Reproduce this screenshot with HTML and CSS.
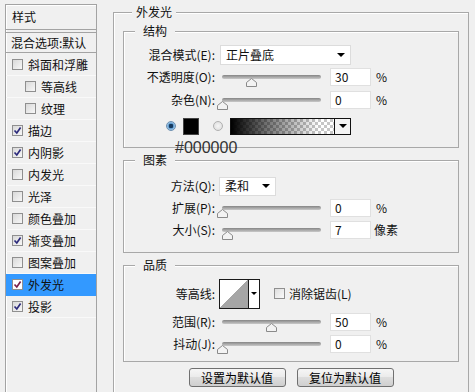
FILE: index.html
```html
<!DOCTYPE html>
<html lang="zh-CN">
<head>
<meta charset="utf-8">
<title>图层样式 - 外发光</title>
<link rel="stylesheet" href="styles.css">
</head>
<body>
<div class="dialog">
  <div class="styles-panel">
    <div class="panel-head">样式</div>
    <div class="panel-blend">混合选项:默认</div>
    <ul class="style-list">
      <li class="style-item"><span class="cb"></span>斜面和浮雕</li>
      <li class="style-item sub"><span class="cb"></span>等高线</li>
      <li class="style-item sub"><span class="cb"></span>纹理</li>
      <li class="style-item"><span class="cb"><svg viewBox="0 0 9 9"><path d="M1.5 4.5 L3.8 7 L7.6 1.6" /></svg></span>描边</li>
      <li class="style-item"><span class="cb"><svg viewBox="0 0 9 9"><path d="M1.5 4.5 L3.8 7 L7.6 1.6" /></svg></span>内阴影</li>
      <li class="style-item"><span class="cb"></span>内发光</li>
      <li class="style-item"><span class="cb"></span>光泽</li>
      <li class="style-item"><span class="cb"></span>颜色叠加</li>
      <li class="style-item"><span class="cb"><svg viewBox="0 0 9 9"><path d="M1.5 4.5 L3.8 7 L7.6 1.6" /></svg></span>渐变叠加</li>
      <li class="style-item"><span class="cb"></span>图案叠加</li>
      <li class="style-item selected"><span class="cb"><svg viewBox="0 0 9 9"><path d="M1.5 4.5 L3.8 7 L7.6 1.6" /></svg></span>外发光</li>
      <li class="style-item"><span class="cb"><svg viewBox="0 0 9 9"><path d="M1.5 4.5 L3.8 7 L7.6 1.6" /></svg></span>投影</li>
    </ul>
  </div>

  <div class="main">
    <span class="legend legend-main">外发光</span>

    <div class="group g1">
      <span class="legend">结构</span>
      <div class="row">
        <span class="lbl">混合模式(E):</span>
        <div class="select select-wide"><span>正片叠底</span><span class="arrow"></span></div>
      </div>
      <div class="row">
        <span class="lbl">不透明度(O):</span>
        <div class="slider"><div class="rail"><div class="track"></div><svg class="thumb" style="left:30%" viewBox="0 0 11 9"><path d="M5.5 0.5 L10.5 4.5 V8.5 H0.5 V4.5 Z"/></svg></div></div>
        <span class="num">30</span><span class="unit">%</span>
      </div>
      <div class="row row-tall">
        <span class="lbl">杂色(N):</span>
        <div class="slider"><div class="rail"><div class="track"></div><svg class="thumb" style="left:0%" viewBox="0 0 11 9"><path d="M5.5 0.5 L10.5 4.5 V8.5 H0.5 V4.5 Z"/></svg></div></div>
        <span class="num">0</span><span class="unit">%</span>
      </div>
      <div class="color-row">
        <span class="radio radio-on"></span>
        <span class="swatch"></span>
        <span class="radio"></span>
        <span class="gradient"></span>
        <span class="grad-arrow"><span class="arrow"></span></span>
      </div>
      <span class="hex">#000000</span>
    </div>

    <div class="group g2">
      <span class="legend">图素</span>
      <div class="row">
        <span class="lbl">方法(Q):</span>
        <div class="select select-narrow"><span>柔和</span><span class="arrow"></span></div>
      </div>
      <div class="row">
        <span class="lbl">扩展(P):</span>
        <div class="slider"><div class="rail"><div class="track"></div><svg class="thumb" style="left:0%" viewBox="0 0 11 9"><path d="M5.5 0.5 L10.5 4.5 V8.5 H0.5 V4.5 Z"/></svg></div></div>
        <span class="num">0</span><span class="unit">%</span>
      </div>
      <div class="row">
        <span class="lbl">大小(S):</span>
        <div class="slider"><div class="rail"><div class="track"></div><svg class="thumb" style="left:6%" viewBox="0 0 11 9"><path d="M5.5 0.5 L10.5 4.5 V8.5 H0.5 V4.5 Z"/></svg></div></div>
        <span class="num">7</span><span class="unit unit-px">像素</span>
      </div>
    </div>

    <div class="group g3">
      <span class="legend">品质</span>
      <div class="row row-contour">
        <span class="lbl">等高线:</span>
        <div class="contour"><span class="contour-swatch"></span><span class="contour-arrow"><span class="arrow arrow-sm"></span></span></div>
        <span class="aa"><span class="cb cb-plain"></span>消除锯齿(L)</span>
      </div>
      <div class="row">
        <span class="lbl">范围(R):</span>
        <div class="slider"><div class="rail"><div class="track"></div><svg class="thumb" style="left:50%" viewBox="0 0 11 9"><path d="M5.5 0.5 L10.5 4.5 V8.5 H0.5 V4.5 Z"/></svg></div></div>
        <span class="num">50</span><span class="unit">%</span>
      </div>
      <div class="row">
        <span class="lbl">抖动(J):</span>
        <div class="slider"><div class="rail"><div class="track"></div><svg class="thumb" style="left:0%" viewBox="0 0 11 9"><path d="M5.5 0.5 L10.5 4.5 V8.5 H0.5 V4.5 Z"/></svg></div></div>
        <span class="num">0</span><span class="unit">%</span>
      </div>
    </div>

    <div class="buttons">
      <button class="btn">设置为默认值</button>
      <button class="btn">复位为默认值</button>
    </div>
  </div>
</div>
</body>
</html>
```

FILE: styles.css
```css
* { box-sizing: border-box; }
html, body { margin: 0; padding: 0; }
body {
  width: 475px;
  height: 392px;
  overflow: hidden;
  background: #f0f0f0;
  font-family: "Noto Sans CJK SC", "Noto Sans", sans-serif;
  font-size: 12px;
  line-height: 16px;
  color: #111;
}
.dialog {
  display: flex;
  align-items: flex-start;
  padding: 4px 0 0 5px;
  height: 392px;
  overflow: hidden;
}

/* left style list */
.styles-panel {
  flex: none;
  width: 92px;
  height: 388px;
  border: 1px solid #a3a3a3;
  border-bottom: none;
  box-shadow: inset 1px 1px 0 #fff;
}
.panel-head {
  height: 25px;
  padding-left: 6px;
  display: flex;
  align-items: center;
  border-bottom: 1px solid #a3a3a3;
}
.panel-blend {
  margin-top: 2px;
  height: 21px;
  padding-left: 5px;
  display: flex;
  align-items: center;
  border-top: 1px solid #a3a3a3;
  border-bottom: 1px solid #a3a3a3;
  white-space: nowrap;
}
.style-list {
  list-style: none;
  margin: 0;
  padding: 1px 0 0;
}
.style-item {
  height: 22px;
  display: flex;
  align-items: center;
  gap: 5px;
  padding-left: 6px;
  border-bottom: 1px solid #f9f9f9;
  white-space: nowrap;
}
.style-item.sub { padding-left: 19px; }
.style-item.selected { background: #3399ff; border-bottom-color: #3399ff; }
.cb {
  flex: none;
  width: 11px;
  height: 11px;
  border: 1px solid #8f8f8f;
  background: linear-gradient(135deg, #d9d9d9, #f7f7f7);
  display: flex;
  align-items: center;
  justify-content: center;
}
.selected .cb { background: #fff; }
.cb svg { width: 9px; height: 9px; }
.cb path { fill: none; stroke: #2c2a7c; stroke-width: 1.7; }
.selected .cb path { stroke: #7a1f4a; }

/* main area */
.main {
  position: relative;
  flex: none;
  width: 356px;
  height: 380px;
  margin: 8px 0 0 16px;
  padding: 18px 9px 0;
  border: 1px solid #a8a8a8;
  border-bottom: none;
  box-shadow: inset 1px 1px 0 #fff;
}
.legend {
  position: absolute;
  top: -9px;
  left: 11px;
  padding: 0 8px;
  background: #f0f0f0;
  line-height: 16px;
  white-space: nowrap;
}
.legend-main { left: 18px; padding: 0 4px; }
.group {
  position: relative;
  border: 1px solid #a8a8a8;
  box-shadow: inset 1px 1px 0 #fff;
}
.g1 { padding: 12px 0 6px; }
.g2 { margin-top: 12px; padding: 14px 0 11px; }
.g3 { margin-top: 12px; padding: 10px 0 6px; }

.row {
  display: flex;
  align-items: center;
  height: 22px;
}
.row-tall { height: 23px; }
.row-contour { height: 35px; }
.lbl {
  flex: none;
  width: 91px;
  margin-right: 4px;
  text-align: right;
  white-space: nowrap;
}
.select {
  display: flex;
  align-items: center;
  justify-content: space-between;
  height: 20px;
  padding: 0 5px 0 5px;
  background: #fff;
  border: 1px solid #dcdcdc;
}
.select-wide { width: 131px; margin-left: 1px; }
.select-narrow { width: 57px; height: 19px; }
.arrow {
  width: 0;
  height: 0;
  border-left: 4px solid transparent;
  border-right: 4px solid transparent;
  border-top: 4px solid #000;
}
.arrow-sm {
  border-left-width: 3px;
  border-right-width: 3px;
  border-top-width: 3px;
}

.slider {
  position: relative;
  flex: none;
  width: 105px;
  height: 22px;
}
.rail {
  position: absolute;
  left: 3px;
  right: 3px;
  top: 0;
  bottom: 0;
}
.track {
  position: absolute;
  left: 0;
  right: 0;
  top: 9px;
  height: 4px;
  border-radius: 2px;
  background: linear-gradient(#858585, #c9c9c9);
}
.thumb {
  position: absolute;
  top: 12px;
  width: 11px;
  height: 9px;
  margin-left: -5.5px;
}
.thumb path { fill: #f3f3f3; stroke: #8a8a8a; stroke-width: 1; }

.num {
  flex: none;
  width: 41px;
  height: 18px;
  margin-left: 6px;
  padding-left: 4px;
  background: #fff;
  border: 1px solid #e0e0e0;
  line-height: 16px;
}
.unit { margin-left: 5px; }
.unit-px { margin-left: 3px; }

.color-row {
  display: flex;
  align-items: center;
  height: 30px;
  padding-left: 42px;
}
.radio {
  flex: none;
  width: 10px;
  height: 10px;
  border-radius: 50%;
  border: 1px solid #b0b0b0;
  background: radial-gradient(circle at 50% 50%, #f6f6f6 0, #e2e2e2 70%);
}
.radio-on {
  border-color: #6c8fb0;
  background: radial-gradient(circle at 50% 50%, #173a5e 0 2px, #5e9bd0 2.5px, #d4e6f5 5px);
}
.swatch {
  flex: none;
  width: 16px;
  height: 17px;
  margin: 0 14px 0 7px;
  background: #000;
  border: 1px solid #444;
}
.gradient {
  flex: none;
  width: 105px;
  height: 17px;
  margin-left: 7px;
  border: 1px solid #111;
  background:
    linear-gradient(to right, #000 0%, rgba(0,0,0,0.55) 35%, rgba(0,0,0,0) 85%),
    repeating-conic-gradient(#c6c6c6 0 25%, #ffffff 0 50%) 0 0 / 6px 6px;
}
.grad-arrow {
  flex: none;
  width: 17px;
  height: 17px;
  margin-left: -1px;
  border: 1px solid #111;
  background: #f4f4f4;
  display: flex;
  align-items: center;
  justify-content: center;
}
.hex {
  position: absolute;
  left: 51px;
  top: 108px;
  font-family: "Liberation Sans", Arial, sans-serif;
  font-size: 16px;
  line-height: 16px;
  color: #333;
}

.contour {
  flex: none;
  display: flex;
  width: 41px;
  height: 30px;
  background: #fff;
  border: 1px solid #1a1a1a;
}
.contour-swatch {
  width: 29px;
  border-right: 1px solid #1a1a1a;
  background: linear-gradient(to bottom right, #ffffff 50%, #a6a6a6 50%);
}
.contour-arrow {
  flex: 1;
  display: flex;
  align-items: center;
  justify-content: center;
}
.aa {
  display: flex;
  align-items: center;
  gap: 4px;
  margin-left: 14px;
  white-space: nowrap;
}
.cb-plain { background: linear-gradient(135deg, #dedede, #fafafa); }

.buttons {
  display: flex;
  justify-content: center;
  gap: 11px;
  margin-top: 6px;
}
.btn {
  width: 97px;
  height: 19px;
  padding: 0;
  border: 1px solid #707070;
  border-radius: 3px;
  background: linear-gradient(#f6f6f6, #ebebeb 45%, #dddddd 50%, #cfcfcf);
  font-family: inherit;
  font-size: 12px;
  line-height: 17px;
  color: #000;
}
```
